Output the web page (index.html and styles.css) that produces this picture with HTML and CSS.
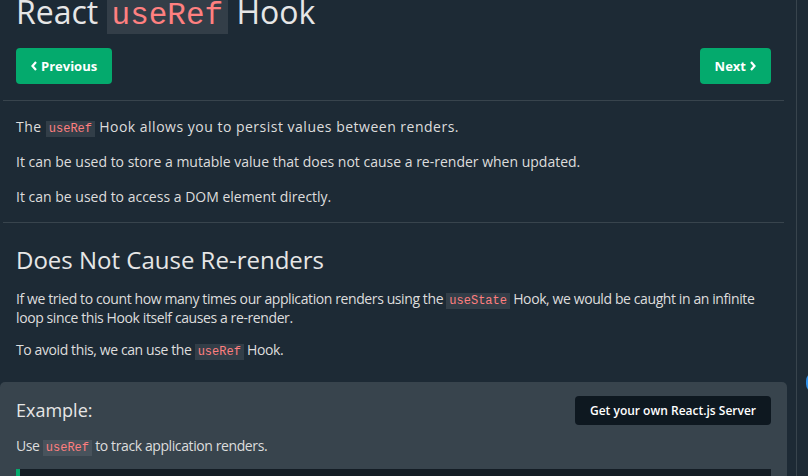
FILE: index.html
```html
<!DOCTYPE html>
<html>
<head>
<meta charset="utf-8">
<link rel="stylesheet" href="styles.css">
</head>
<body>
<div class="page">
  <main class="main">
    <h1 class="title">React <code class="big-code">useRef</code> Hook</h1>
    <div class="nav">
      <a class="btn"><svg class="chev" width="6" height="10" viewBox="0 0 6 10"><path d="M5 1 L1.5 5 L5 9" fill="none" stroke="#fff" stroke-width="2.2"/></svg>Previous</a>
      <a class="btn">Next<svg class="chev" width="6" height="10" viewBox="0 0 6 10"><path d="M1 1 L4.5 5 L1 9" fill="none" stroke="#fff" stroke-width="2.2"/></svg></a>
    </div>
    <hr class="rule">
    <section class="block intro">
      <p class="wide">The <code class="ic">useRef</code> Hook allows you to persist values between renders.</p>
      <p>It can be used to store a mutable value that does not cause a re-render when updated.</p>
      <p>It can be used to access a DOM element directly.</p>
    </section>
    <hr class="rule">
    <section class="block topic">
      <h2 class="h2">Does Not Cause Re-renders</h2>
      <p>If we tried to count how many times our application renders using the <code class="ic">useState</code> Hook, we would be caught in an infinite loop since this Hook itself causes a re-render.</p>
      <p>To avoid this, we can use the <code class="ic">useRef</code> Hook.</p>
    </section>
    <div class="example">
      <div class="ex-head">
        <h3 class="h3">Example:</h3>
        <a class="server-btn">Get your own React.js Server</a>
      </div>
      <p class="ex-text">Use <code class="ic">useRef</code> to track application renders.</p>
      <div class="codeblock"></div>
    </div>
  </main>
  <aside class="side">
    <div class="side-pill"></div>
  </aside>
</div>
</body>
</html>
```

FILE: styles.css
```css
html, body {
  margin: 0;
  padding: 0;
  background: #1d2a35;
  overflow: hidden;
}
body {
  width: 808px;
  height: 476px;
  color: #dddddd;
  font-family: "Open Sans", "Noto Sans", sans-serif;
  font-size: 14px;
}
.page {
  display: flex;
  height: 476px;
}
.main {
  width: 787px;
  flex: none;
}
.side {
  margin-left: 9px;
  border-left: 1px solid #38444d;
  flex: 1;
  padding-top: 372px;
  padding-left: 9px;
}
.side-pill {
  width: 30px;
  height: 17px;
  border: 2px solid #2f8fe8;
  border-radius: 9px;
}
.title {
  margin: -11px 0 0 16px;
  font-weight: 400;
  font-size: 32px;
  line-height: 46px;
  color: #e6e6e6;
}
.big-code {
  font-family: "Liberation Mono", "DejaVu Sans Mono", monospace;
  font-size: 31px;
  color: #ff8080;
  background: #333e48;
  padding: 2px 5px 1px;
}
.nav {
  display: flex;
  justify-content: space-between;
  margin: 9px 16px 16px;
}
.btn {
  display: flex;
  align-items: center;
  gap: 4px;
  height: 36px;
  padding: 0 15px;
  background: #04aa6d;
  color: #fff;
  border-radius: 4px;
  font-weight: 700;
  font-size: 13px;
}
.chev { display: block; }
.rule {
  border: 0;
  border-top: 1px solid #38444d;
  margin: 0 3px;
  height: 0;
}
.block {
  padding: 0 16px;
}
.block p, .example p {
  margin: 0;
  line-height: 19px;
}
.intro {
  padding-top: 16px;
  padding-bottom: 16px;
}
.intro p + p { margin-top: 16px; }
.intro .wide { letter-spacing: 0.5px; }
.intro .wide .ic { letter-spacing: 0; }
.topic p, .ex-text { letter-spacing: -0.4px; }
.topic p + p { margin-top: 13px; }
.ic {
  font-family: "Liberation Mono", "DejaVu Sans Mono", monospace;
  font-size: 12px;
  line-height: 1;
  letter-spacing: 0;
  color: #ff7f7f;
  background: #323e48;
  padding: 1px 3px;
}
.h2 {
  margin: 21px 0 13px;
  font-weight: 400;
  font-size: 24px;
  line-height: 32px;
  color: #e6e6e6;
}
.example {
  margin-top: 23px;
  background: #38444d;
  border-radius: 5px;
  padding: 13px 16px 0;
}
.example .ic { background: #48535c; }
.ex-head {
  display: flex;
  justify-content: space-between;
  align-items: center;
}
.h3 {
  margin: 0;
  font-weight: 400;
  font-size: 18px;
  line-height: 30px;
  color: #e6e6e6;
}
.server-btn {
  background: #0e1820;
  color: #fff;
  border-radius: 4px;
  font-weight: 600;
  font-size: 12px;
  padding: 0 15px;
  height: 29px;
  display: flex;
  align-items: center;
}
.example p { margin-top: 11px; }
.codeblock {
  margin-top: 14px;
  height: 40px;
  background: #141d25;
  border-left: 4px solid #04aa6d;
}
```
